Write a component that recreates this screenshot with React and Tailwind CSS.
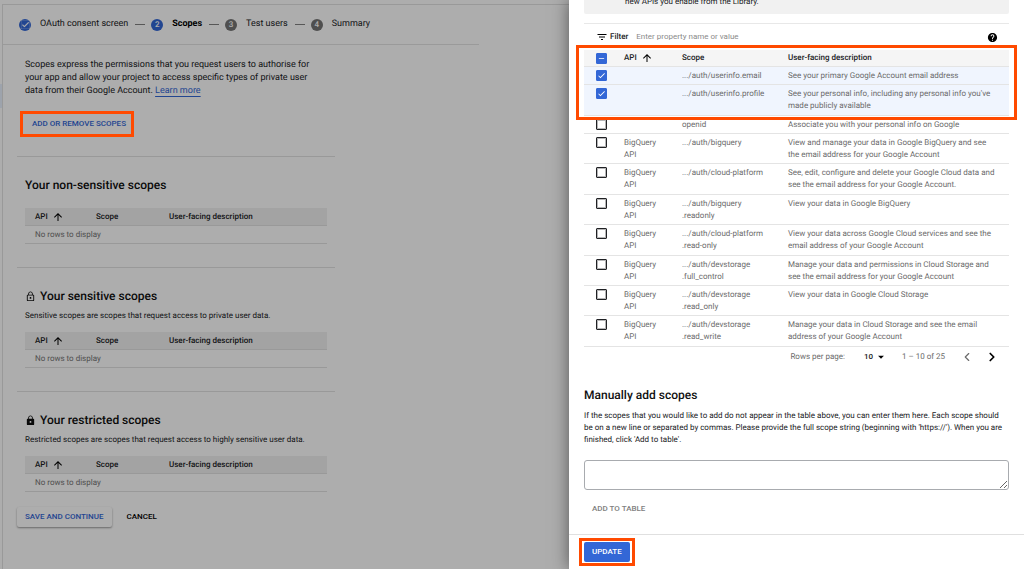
import React, { useState } from "react";
import { ChevronLeft, ChevronRight } from "lucide-react";
import {
  MdArrowDropDown,
  MdArrowUpward,
  MdCheck,
  MdFilterList,
  MdHelp,
  MdLock,
  MdLockOutline,
  MdRemove,
} from "react-icons/md";

const steps = [
  { label: "OAuth consent screen", state: "done" },
  { label: "Scopes", state: "current" },
  { label: "Test users", state: "todo" },
  { label: "Summary", state: "todo" },
];

const scopeRows = [
  {
    id: 1,
    api: "",
    scope: [".../auth/userinfo.email"],
    text: "See your primary Google Account email address",
  },
  {
    id: 2,
    api: "",
    scope: [".../auth/userinfo.profile"],
    text: "See your personal info, including any personal info you've made publicly available",
  },
  {
    id: 3,
    api: "",
    scope: ["openid"],
    text: "Associate you with your personal info on Google",
  },
  {
    id: 4,
    api: "BigQuery API",
    scope: [".../auth/bigquery"],
    text: "View and manage your data in Google BigQuery and see the email address for your Google Account",
  },
  {
    id: 5,
    api: "BigQuery API",
    scope: [".../auth/cloud-platform"],
    text: "See, edit, configure and delete your Google Cloud data and see the email address for your Google Account.",
  },
  {
    id: 6,
    api: "BigQuery API",
    scope: [".../auth/bigquery", ".readonly"],
    text: "View your data in Google BigQuery",
  },
  {
    id: 7,
    api: "BigQuery API",
    scope: [".../auth/cloud-platform", ".read-only"],
    text: "View your data across Google Cloud services and see the email address of your Google Account",
  },
  {
    id: 8,
    api: "BigQuery API",
    scope: [".../auth/devstorage", ".full_control"],
    text: "Manage your data and permissions in Cloud Storage and see the email address for your Google Account",
  },
  {
    id: 9,
    api: "BigQuery API",
    scope: [".../auth/devstorage", ".read_only"],
    text: "View your data in Google Cloud Storage",
  },
  {
    id: 10,
    api: "BigQuery API",
    scope: [".../auth/devstorage", ".read_write"],
    text: "Manage your data in Cloud Storage and see the email address of your Google Account",
  },
];

const Stepper = () => (
  <ol className="flex items-center h-10 px-4 border-b border-[#e4e4e4] text-[9px] text-[#202124]">
    {steps.map((step, index) => (
      <li key={step.label} className="flex items-center whitespace-nowrap">
        {index > 0 && (
          <span className="w-[10px] h-px ml-[7px] mr-[6px] bg-[#808080]" />
        )}
        <span
          className={`flex items-center justify-center size-3 mr-[9px] rounded-full text-[8px] font-medium text-white ${
            step.state === "todo" ? "bg-[#757575]" : "bg-[#3367d6]"
          }`}
        >
          {step.state === "done" ? (
            <MdCheck size={9} className="stroke-current stroke-1" />
          ) : (
            index + 1
          )}
        </span>
        <span className={step.state === "current" ? "font-bold text-black" : ""}>
          {step.label}
        </span>
      </li>
    ))}
  </ol>
);

const EmptyTable = () => (
  <table className="w-full table-fixed text-left text-[8px] leading-[17px]">
    <thead>
      <tr className="bg-[#f1f1f1] border-b border-[#e2e2e2] text-[#202124]">
        <th className="w-[71px] pl-[10px] font-medium">
          <span className="flex items-center gap-1">
            API <MdArrowUpward size={12} className="text-black" />
          </span>
        </th>
        <th className="w-[73px] font-medium">Scope</th>
        <th className="font-medium">User-facing description</th>
      </tr>
    </thead>
    <tbody>
      <tr className="border-b border-[#e2e2e2] text-[#757575]">
        <td colSpan={3} className="pl-[10px]">
          No rows to display
        </td>
      </tr>
    </tbody>
  </table>
);

const ScopeSection = ({ title, icon, note }) => (
  <section className="pt-[19px] px-2 pb-[23px] border-t border-[#e2e2e2] last-of-type:pb-0">
    <h2 className="flex items-center gap-1 text-[12px] leading-[18px] font-medium text-[#101010]">
      {icon}
      {title}
    </h2>
    {note && (
      <p className="mt-1 text-[8px] leading-[14px] text-[#202124]">{note}</p>
    )}
    <div className={note ? "mt-[9px]" : "mt-[14px]"}>
      <EmptyTable />
    </div>
  </section>
);

const Checkbox = ({ checked, partial, onChange, label }) => (
  <span className="grid size-[11px] mx-auto place-items-center">
    <input
      type="checkbox"
      aria-label={label}
      checked={checked}
      onChange={onChange}
      className="col-start-1 row-start-1 size-[11px] appearance-none rounded-[1px] border border-[#202124] bg-white shadow-[inset_0_0_0_1px_#20212455] checked:border-[#3367d6] checked:bg-[#3367d6] checked:shadow-none"
    />
    {checked && (
      <span className="col-start-1 row-start-1 pointer-events-none text-white">
        {partial ? (
          <MdRemove size={9} />
        ) : (
          <MdCheck size={9} />
        )}
      </span>
    )}
  </span>
);

// orange frame laid over the part to look at
const Highlight = ({ className }) => (
  <span
    className={`absolute z-20 border-3 border-[#ff4a00] pointer-events-none ${className}`}
  />
);

const ConsentPage = () => (
  <main className="flex-1 min-w-0 mt-1 border-l border-t border-[#e2e2e2]">
    <div className="max-w-[476px]">
      <Stepper />
      <div className="max-w-[332px] pl-[14px]">
        <div className="px-2 pt-[14px] pb-[22px]">
          <p className="text-[9px] leading-[13px] text-[#202124]">
            Scopes express the permissions that you request users to authorise for
            your app and allow your project to access specific types of private
            user data from their Google Account.{" "}
            <a
              href="#learn"
              className="text-[#3367d6] underline underline-offset-3"
            >
              Learn more
            </a>
          </p>
          <div className="relative w-fit mt-4 -ml-px">
            <button className="block px-2 h-5 text-[8px] font-medium text-[#3367d6]">
              ADD OR REMOVE SCOPES
            </button>
            <Highlight className="-left-1 right-0 -inset-y-[3px]" />
          </div>
        </div>
        <ScopeSection title="Your non-sensitive scopes" />
        <ScopeSection
          title="Your sensitive scopes"
          icon={<MdLockOutline size={11} />}
          note="Sensitive scopes are scopes that request access to private user data."
        />
        <ScopeSection
          title="Your restricted scopes"
          icon={<MdLock size={11} />}
          note="Restricted scopes are scopes that request access to highly sensitive user data."
        />
        <div className="flex items-center gap-[7px] mt-[15px] text-[8px] font-medium">
          <button className="h-5 px-2 rounded-xs shadow-[0_1px_2px_#00000066] text-[#3367d6]">
            SAVE AND CONTINUE
          </button>
          <button className="h-5 px-2 text-black">CANCEL</button>
        </div>
      </div>
    </div>
  </main>
);

const ScopeTable = () => {
  const [selected, setSelected] = useState([1, 2]);

  const toggle = (id) => {
    setSelected(
      selected.includes(id)
        ? selected.filter((s) => s !== id)
        : [...selected, id]
    );
  };

  const toggleAll = () => {
    setSelected(selected.length ? [] : scopeRows.map((row) => row.id));
  };

  return (
    <div className="relative">
      <table className="w-full h-[297px] table-fixed text-left text-[8px] leading-[12px] text-[#6b6b6b]">
        <thead>
          <tr className="bg-[#f5f5f5] border-b border-[#e4e4e4] text-[#202124]">
            <th className="w-10 pr-[5px]">
              <Checkbox
                label="Select all"
                checked={selected.length > 0}
                partial={selected.length < scopeRows.length}
                onChange={toggleAll}
              />
            </th>
            <th className="w-[58px] py-[2px] font-medium">
              <span className="flex items-center gap-1">
                API <MdArrowUpward size={12} className="text-black" />
              </span>
            </th>
            <th className="w-[106px] font-medium">Scope</th>
            <th className="font-medium">User-facing description</th>
          </tr>
        </thead>
        <tbody>
          {scopeRows.map((row) => (
            <tr
              key={row.id}
              className={`border-b border-[#e4e4e4] align-top ${
                selected.includes(row.id) ? "bg-[#f0f5fe]" : ""
              }`}
            >
              <td className="pt-[3px] pr-[5px]">
                <Checkbox
                  label={row.scope.join("")}
                  checked={selected.includes(row.id)}
                  onChange={() => toggle(row.id)}
                />
              </td>
              <td className="pt-[3px] pb-[2px] pr-5">{row.api}</td>
              <td className="pt-[3px] pb-[2px]">
                {row.scope.map((part) => (
                  <span key={part} className="block">
                    {part}
                  </span>
                ))}
              </td>
              <td className="pt-[3px] pb-[2px] pr-3">{row.text}</td>
            </tr>
          ))}
        </tbody>
      </table>
      <Highlight className="-inset-x-2 -top-[5px] h-[75px]" />
    </div>
  );
};

const ScopeDrawer = () => (
  <aside className="relative z-10 flex flex-col w-[455px] shrink-0 bg-white shadow-[0_0_16px_#00000080]">
    <div className="flex-1 min-h-0 overflow-hidden px-[15px]">
      <div className="-mt-1 pl-[41px] pb-[6px] rounded-b-xs bg-[#f1f1f1] text-[8px] leading-[12px] text-[#202124]">
        new APIs you enable from the Library.
      </div>
      <div className="flex items-center h-[27px] mt-[9px] pl-3 pr-[11px] border-t border-[#e8e8e8] text-[8px]">
        <MdFilterList size={12} className="text-black" />
        <label htmlFor="filter" className="ml-[2px] font-medium text-[#202124]">
          Filter
        </label>
        <input
          id="filter"
          placeholder="Enter property name or value"
          className="flex-1 ml-2 outline-none placeholder:text-[#8a8a8a]"
        />
        <button aria-label="Help">
          <MdHelp size={11} className="text-black" />
        </button>
      </div>
      <ScopeTable />
      <div className="flex items-center justify-end h-5 pr-[10px] text-[8px] text-[#6b6b6b]">
        <label htmlFor="rows">Rows per page:</label>
        <span className="flex items-center ml-[19px] mr-[14px] text-[#202124]">
          <select id="rows" className="appearance-none font-medium">
            <option>10</option>
          </select>
          <MdArrowDropDown size={14} className="text-black" />
        </span>
        <span>1 – 10 of 25</span>
        <button aria-label="Previous page" className="ml-[15px]">
          <ChevronLeft size={14} strokeWidth={2} />
        </button>
        <button aria-label="Next page" className="ml-[11px] text-black">
          <ChevronRight size={14} strokeWidth={3} />
        </button>
      </div>
      <h2 className="mt-[19px] text-[12px] leading-[18px] font-medium text-[#101010]">
        Manually add scopes
      </h2>
      <label
        htmlFor="manual"
        className="block mt-[6px] text-[8px] leading-[12px] text-[#202124]"
      >
        If the scopes that you would like to add do not appear in the table above,
        you can enter them here. Each scope should be on a new line or separated
        by commas. Please provide the full scope string (beginning with
        'https://'). When you are finished, click 'Add to table'.
      </label>
      <textarea
        id="manual"
        className="block w-full h-[30px] mt-[14px] rounded-[3px] border border-[#a8abaf] outline-none"
      />
      <button className="h-5 mt-[9px] px-2 text-[8px] font-medium text-[#808080]">
        ADD TO TABLE
      </button>
    </div>
    <footer className="flex px-[15px] py-[7px] border-t border-[#e0e0e0]">
      <div className="relative">
        <button className="block h-5 px-2 rounded-xs bg-[#3367d6] text-[8px] font-medium text-white">
          UPDATE
        </button>
        <Highlight className="-inset-x-[5px] -inset-y-1" />
      </div>
    </footer>
  </aside>
);

const App = () => {
  return (
    <div className="relative flex h-screen overflow-hidden bg-white font-['Roboto',sans-serif] [text-rendering:geometricPrecision]">
      {/* edge of the side menu with its active entry */}
      <nav className="w-[2px] shrink-0 pt-[84px]">
        <div className="h-6 bg-[#e8f0fe]" />
      </nav>
      <ConsentPage />
      <div className="absolute inset-0 bg-black/32" />
      <ScopeDrawer />
    </div>
  );
};

export default App;
